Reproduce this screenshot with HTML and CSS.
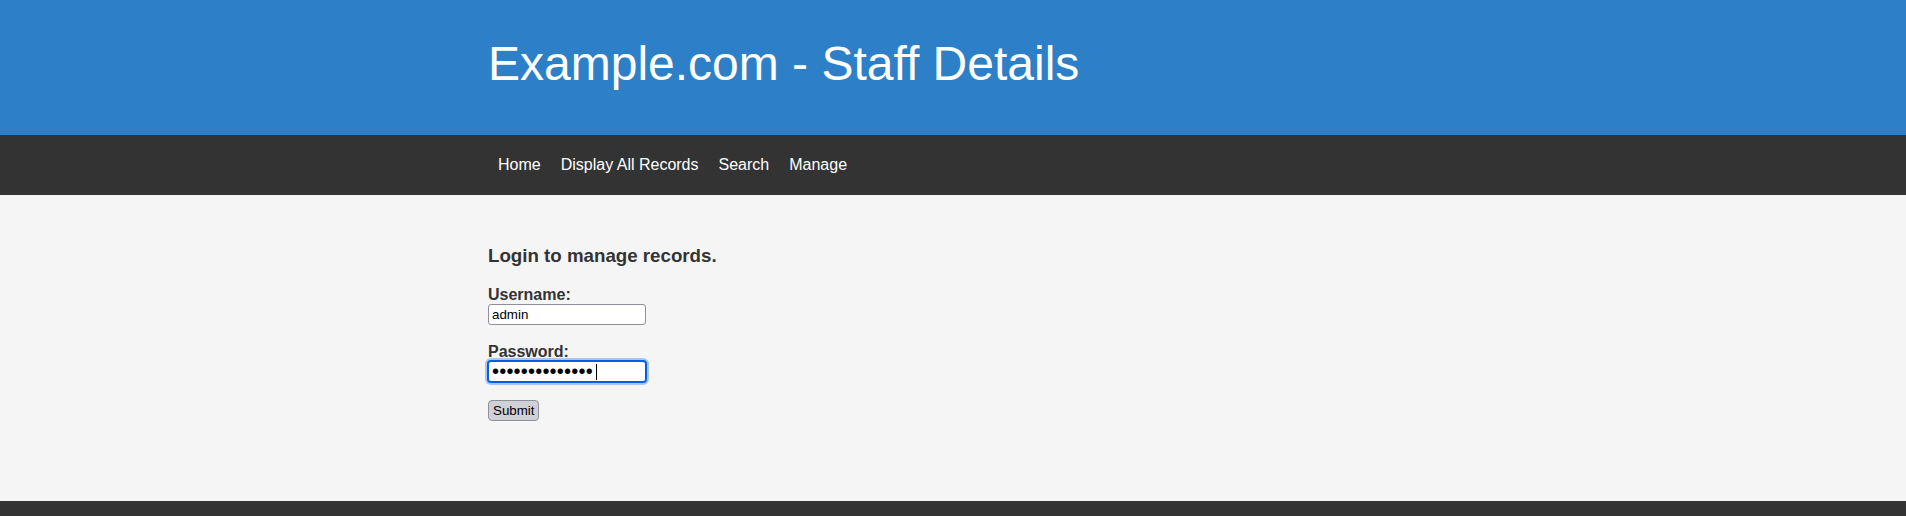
FILE: index.html
```html
<!DOCTYPE html>
<html lang="en">
<head>
<meta charset="utf-8">
<title>Example.com - Staff Details</title>
<link rel="stylesheet" href="styles.css">
</head>
<body>
<header class="site-header">
  <div class="container">
    <h1 class="site-title">Example.com - Staff Details</h1>
  </div>
</header>
<nav class="site-nav">
  <div class="container nav-list">
    <a class="nav-link" href="#">Home</a>
    <a class="nav-link" href="#">Display All Records</a>
    <a class="nav-link" href="#">Search</a>
    <a class="nav-link" href="#">Manage</a>
  </div>
</nav>
<main class="site-main">
  <div class="container">
    <h3 class="form-title">Login to manage records.</h3>
    <form class="login-form">
      <p class="field">
        <label class="field-label" for="username">Username:</label>
        <input class="text-input" id="username" type="text" value="admin">
      </p>
      <p class="field field-password">
        <label class="field-label" for="password">Password:</label>
        <span class="input-wrap">
          <input class="text-input is-focused" id="password" type="password" value="secretpassword">
          <span class="caret"></span>
        </span>
      </p>
      <p class="field field-actions">
        <input class="submit-btn" type="submit" value="Submit">
      </p>
    </form>
  </div>
</main>
<footer class="site-footer"></footer>
</body>
</html>
```
FILE: styles.css
```css
html, body {
  margin: 0;
  padding: 0;
}
body {
  font-family: "Liberation Sans", Arial, sans-serif;
  font-size: 16px;
  color: #333;
  background: #f5f5f5;
}
.container {
  width: 930px;
  margin: 0 auto;
}
.site-header {
  background: #2d7fc7;
  height: 135px;
  box-sizing: border-box;
  padding-top: 36px;
}
.site-title {
  margin: 0;
  font-size: 48px;
  line-height: 55px;
  font-weight: normal;
  color: #fff;
}
.site-nav {
  background: #333;
  height: 60px;
  box-sizing: border-box;
  padding: 20px 0;
}
.nav-list {
  display: flex;
}
.nav-link {
  color: #fff;
  text-decoration: none;
  padding: 0 10px;
  line-height: 20px;
  font-size: 16px;
}
.site-main {
  background: #f5f5f5;
  min-height: 306px;
  box-sizing: border-box;
  padding-top: 31px;
}
.form-title {
  font-size: 18.72px;
  font-weight: bold;
  margin: 18.72px 0 19.72px;
  color: #333;
}
.login-form {
  margin: 0;
}
.field {
  margin: 16px 0;
}
.field-password {
  margin-top: 18px;
}
.field-actions {
  margin-top: 18px;
}
.field-label {
  display: block;
  font-weight: bold;
  font-size: 16px;
  color: #333;
}
.input-wrap {
  position: relative;
  display: block;
  width: 158px;
}
.text-input {
  display: block;
  box-sizing: border-box;
  width: 158px;
  height: 21px;
  margin: 0;
  padding: 1px 3px;
  border: 1px solid #8f8f9d;
  border-radius: 3px;
  background: #fff;
  font-family: "Liberation Sans", Arial, sans-serif;
  font-size: 13.33px;
  color: #000;
  outline: none;
}
.text-input.is-focused {
  border-color: #0060df;
  box-shadow: 0 0 0 1px #0060df, 0 0 0 3px #aac6ee;
  font-size: 20px;
  line-height: 17px;
  letter-spacing: 0.2px;
  padding: 0 3px;
}
.caret {
  position: absolute;
  left: 108px;
  top: 3px;
  width: 1px;
  height: 16px;
  background: #000;
}
.submit-btn {
  display: block;
  box-sizing: border-box;
  height: 21px;
  margin: 0;
  padding: 1px 4px;
  border: 1px solid #8f8f9d;
  border-radius: 4px;
  background: #d0d0d7;
  font-family: "Liberation Sans", Arial, sans-serif;
  font-size: 13.33px;
  color: #000;
}
.site-footer {
  background: #333;
  height: 60px;
}
```
